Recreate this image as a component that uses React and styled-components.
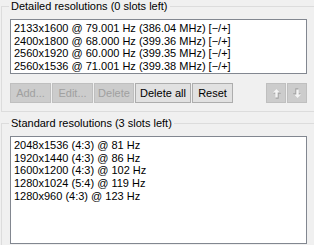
import React from 'react';
import styled, { createGlobalStyle } from 'styled-components';

const GlobalStyle = createGlobalStyle`
    html, body {
        margin: 0;
        padding: 0;
        background: #f0f0f0;
        overflow: hidden;
    }
    body {
        font-family: "Liberation Sans", Arial, sans-serif;
        font-size: 11px;
        color: #000;
    }
`

const Window = styled.div`
    width: 314px;
    height: 245px;
    overflow: hidden;
    padding-left: 1px;
    box-sizing: border-box;
    background: #f0f0f0;
`

const Group = styled.fieldset`
    margin: ${props => props.first ? '0' : '5px'} 0 0 0;
    padding: 6px 0 8px 8px;
    width: 330px;
    min-width: 0;
    border: 1px solid #dcdcdc;
    border-right: none;
    ${props => props.open && 'border-bottom: none;'}
`

const Legend = styled.legend`
    margin-left: -1px;
    padding: 0 2px;
    line-height: 13px;
    font-size: 11px;
`

const ListBox = styled.div`
    width: 297px;
    height: ${props => props.height}px;
    box-sizing: border-box;
    border: 1px solid #828790;
    background: #fff;
    padding: 2px 0 0 3px;
    overflow: hidden;
`

const Item = styled.div`
    line-height: 12.67px;
    height: 12.67px;
    white-space: nowrap;
`

const ButtonRow = styled.div`
    display: flex;
    width: 297px;
    gap: 1px;
    margin-top: 9px;
`

const Button = styled.button`
    width: ${props => props.w}px;
    height: 20px;
    margin: 0;
    padding: 0;
    box-sizing: border-box;
    font-family: inherit;
    font-size: 11px;
    background: #e1e1e1;
    border: 1px solid #adadad;
    color: #000;

    &:disabled {
        background: #cccccc;
        border-color: #bfbfbf;
        color: #a0a0a0;
    }
`

const Spacer = styled.div`
    flex: 1;
`

const ArrowButton = styled(Button)`
    display: flex;
    align-items: center;
    justify-content: center;
`

const Arrow = ({ down }) => (
    <svg width="9" height="11" viewBox="0 0 9 11" style={{ transform: down ? 'rotate(180deg)' : 'none' }}>
        <path d="M4.5 1 L8.5 5 L6 5 L6 10 L3 10 L3 5 L0.5 5 Z" fill="#a3a3a3" transform="translate(0.7 0.7)" />
        <path d="M4.5 1 L8 4.5 L5.7 4.5 L5.7 9.5 L3.3 9.5 L3.3 4.5 L1 4.5 Z" fill="#f4f4f4" />
    </svg>
)

const detailed = [
    '2133x1600 @ 79.001 Hz (386.04 MHz) [\u2212/+]',
    '2400x1800 @ 68.000 Hz (399.36 MHz) [\u2212/+]',
    '2560x1920 @ 60.000 Hz (399.35 MHz) [\u2212/+]',
    '2560x1536 @ 71.001 Hz (399.38 MHz) [\u2212/+]',
]

const standard = [
    '2048x1536 (4:3) @ 81 Hz',
    '1920x1440 (4:3) @ 86 Hz',
    '1600x1200 (4:3) @ 102 Hz',
    '1280x1024 (5:4) @ 119 Hz',
    '1280x960 (4:3) @ 123 Hz',
]

const App = () => {
    return (
        <Window>
            <GlobalStyle />
            <Group first>
                <Legend>Detailed resolutions (0 slots left)</Legend>
                <ListBox height={55}>
                    {detailed.map(d => <Item key={d}>{d}</Item>)}
                </ListBox>
                <ButtonRow>
                    <Button w={41} disabled>Add...</Button>
                    <Button w={41} disabled>Edit...</Button>
                    <Button w={40} disabled>Delete</Button>
                    <Button w={56}>Delete all</Button>
                    <Button w={41}>Reset</Button>
                    <Spacer />
                    <ArrowButton w={20} disabled><Arrow /></ArrowButton>
                    <ArrowButton w={20} disabled><Arrow down /></ArrowButton>
                </ButtonRow>
            </Group>
            <Group open>
                <Legend>Standard resolutions (3 slots left)</Legend>
                <ListBox height={108}>
                    {standard.map(s => <Item key={s}>{s}</Item>)}
                </ListBox>
            </Group>
        </Window>
    )
}

export default App
